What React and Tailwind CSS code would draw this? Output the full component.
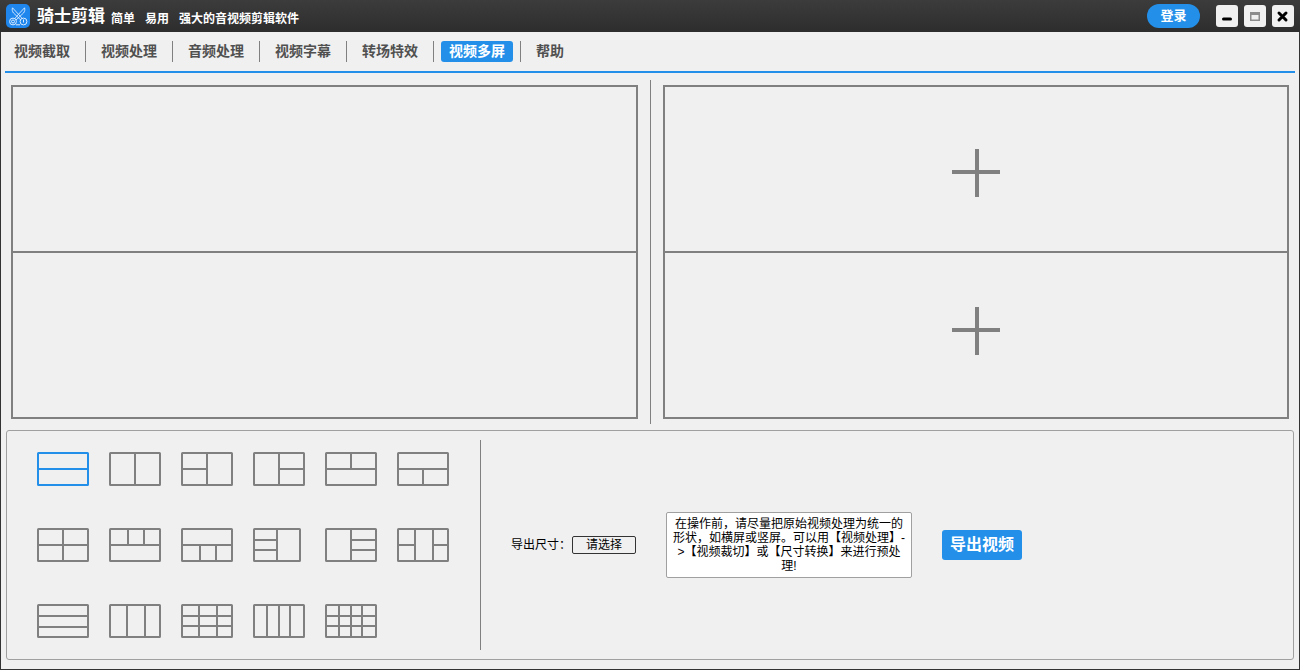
import { useState } from 'react';
import clsx from 'clsx';

const menuItems = ['视频截取', '视频处理', '音频处理', '视频字幕', '转场特效', '视频多屏', '帮助'];

// Divider lines of every split layout, drawn inside a 52x34 frame.
const layouts = [
	{ name: '上下两屏', lines: 'M1 17H51' },
	{ name: '左右两屏', lines: 'M26 1V33' },
	{ name: '左二右一', lines: 'M26 1V33M1 17H26' },
	{ name: '左一右二', lines: 'M26 1V33M26 17H51' },
	{ name: '上二下一', lines: 'M1 17H51M26 1V17' },
	{ name: '上一下二', lines: 'M1 17H51M26 17V33' },
	{ name: '四屏', lines: 'M1 17H51M26 1V33' },
	{ name: '上三下一', lines: 'M1 17H51M19 1V17M35 1V17' },
	{ name: '上一下三', lines: 'M1 17H51M19 17V33M35 17V33' },
	{ name: '左三右一', lines: 'M24 1V33M1 12H24M1 22H24', frameWidth: 46 },
	{ name: '左一右三', lines: 'M26 1V33M26 12H51M26 22H51' },
	{ name: '左二中一右二', lines: 'M18 1V33M36 1V33M1 17H18M36 17H51' },
	{ name: '上中下三屏', lines: 'M1 12H51M1 23H51' },
	{ name: '左中右三屏', lines: 'M18 1V33M36 1V33' },
	{ name: '九屏', lines: 'M18 1V33M36 1V33M1 12H51M1 22H51' },
	{ name: '四列', lines: 'M14 1V33M26 1V33M37 1V33' },
	{ name: '十二屏', lines: 'M14 1V33M26 1V33M37 1V33M1 12H51M1 22H51' },
];

const Logo = () => (
	<svg width="24" height="24" viewBox="0 0 24 24" fill="none" stroke="#dcecff" aria-hidden="true">
		<rect width="24" height="24" rx="5" fill="#1f86ee" stroke="none" />
		<path d="M6.5 3.8C5.8 5.5 6.3 7.5 7.5 9L14.8 16M6.5 3.8L14.5 12.5L16 14.5" strokeWidth="0.9" />
		<path d="M18.5 3.8C19.2 5.5 18.7 7.5 17.5 9L10 16M18.5 3.8L10.5 12.5L9 14.5" strokeWidth="0.9" />
		<circle cx="7" cy="17.5" r="3.4" strokeWidth="1" />
		<circle cx="7" cy="17.5" r="1.5" strokeWidth="1" />
		<circle cx="17.5" cy="17.5" r="3.4" strokeWidth="1" />
		<path d="M17.5 15.5V18.5M10 20.8H14" strokeWidth="1" />
	</svg>
);

const WindowButton = ({ label, children }) => (
	<button
		type="button"
		aria-label={label}
		className="flex h-[22px] w-[22px] items-center justify-center rounded-[3px] bg-[#f0f0f0]">
		<svg width="22" height="22" viewBox="0 0 22 22" fill="none">
			{children}
		</svg>
	</button>
);

const TitleBar = () => (
	<header className="flex h-8 items-center bg-linear-to-b from-[#3c3c3c] to-[#2d2d2d] px-1.5 text-white">
		<Logo />
		<h1 className="ml-[7px] pt-0.5 text-[17px] leading-6 font-bold">骑士剪辑</h1>
		<p className="ml-1.5 flex gap-2.5 pt-1.5 text-[12px] leading-5 font-bold">
			<span>简单</span>
			<span>易用</span>
			<span>强大的音视频剪辑软件</span>
		</p>
		<button
			type="button"
			className="ml-auto h-6 w-[53px] rounded-full bg-[#238fe9] text-[13px] leading-6 font-bold">
			登录
		</button>
		<div className="ml-4 flex gap-1.5">
			<WindowButton label="最小化">
				<path d="M7.5 14H14.5" stroke="#000" strokeWidth="3" strokeLinecap="round" />
			</WindowButton>
			<WindowButton label="最大化">
				<path d="M6.75 7.75H15.25V15.25H6.75Z" stroke="#8c8c8c" strokeWidth="1.5" />
				<path d="M6 8.5H16" stroke="#8c8c8c" strokeWidth="3" />
			</WindowButton>
			<WindowButton label="关闭">
				<path d="M7 8L14 15M14 8L7 15" stroke="#000" strokeWidth="3" strokeLinecap="round" />
			</WindowButton>
		</div>
	</header>
);

const MainMenu = ({ active, onSelect }) => (
	<nav className="mx-1 flex border-b-2 border-[#238fe9] py-[9px] pl-px">
		{menuItems.map((item, index) => (
			<div key={item} className="flex">
				{index > 0 && <span className="mx-[7px] w-px bg-[#808080]" />}
				<button
					type="button"
					onClick={() => onSelect(item)}
					className={clsx(
						'h-[21px] rounded-[3px] px-2 text-[14px] leading-[21px] font-bold',
						item === active ? 'bg-[#238fe9] text-white' : 'text-[#505050]',
					)}>
					{item}
				</button>
			</div>
		))}
	</nav>
);

const AddVideoButton = ({ className }) => (
	<button
		type="button"
		aria-label="添加视频"
		className={clsx('flex flex-1 items-center justify-center', className)}>
		<svg width="48" height="48" viewBox="0 0 48 48" stroke="#808080" strokeWidth="4">
			<path d="M0 23H48M25 0V48" />
		</svg>
	</button>
);

const LayoutButton = ({ layout, selected, onClick }) => (
	<button
		type="button"
		aria-label={layout.name}
		aria-pressed={selected}
		onClick={onClick}
		className={selected ? 'text-[#238fe9]' : 'text-[#808080]'}>
		<svg width="52" height="34" viewBox="0 0 52 34" fill="none" stroke="currentColor" strokeWidth="2">
			<rect x="1" y="1" width={layout.frameWidth ?? 50} height="32" rx="0.5" />
			<path d={layout.lines} />
		</svg>
	</button>
);

const App = () => {
	const [activeMenu, setActiveMenu] = useState('视频多屏');
	const [activeLayout, setActiveLayout] = useState('上下两屏');

	return (
		<div className="flex min-h-screen flex-col bg-[#f0f0f0] font-['Liberation_Sans','Noto_Sans_CJK_SC',sans-serif] text-black">
			<TitleBar />
			<div className="flex flex-1 flex-col border-x border-b border-[#333333]">
				<MainMenu active={activeMenu} onSelect={setActiveMenu} />

				{/* Preview on the left, video slots on the right */}
				<main className="flex flex-1 px-2.5 pt-[7px]">
					<section aria-label="预览" className="my-[5px] flex flex-1 flex-col border-2 border-[#808080]">
						<div className="flex-1 border-b-2 border-[#808080]" />
						<div className="flex-1" />
					</section>
					<div className="mx-3 w-px bg-[#808080]" />
					<section aria-label="视频" className="my-[5px] flex flex-1 flex-col border-2 border-[#808080]">
						<AddVideoButton className="border-b-2 border-[#808080] pt-2" />
						<AddVideoButton className="pb-2" />
					</section>
				</main>

				{/* Layout picker and export options */}
				<footer className="mx-[5px] mt-1.5 mb-[9px] flex items-center rounded-[3px] border border-[#a0a0a0] pl-[30px]">
					<div className="grid grid-cols-6 gap-x-5 gap-y-[42px] py-[21px]">
						{layouts.map((layout) => (
							<LayoutButton
								key={layout.name}
								layout={layout}
								selected={layout.name === activeLayout}
								onClick={() => setActiveLayout(layout.name)}
							/>
						))}
					</div>
					<div className="my-[9px] ml-[31px] w-px self-stretch bg-[#808080]" />
					<div className="ml-[30px] flex items-center gap-[30px]">
						<div className="flex items-center gap-px">
							<span id="export-size" className="text-[12px] leading-[18px]">导出尺寸：</span>
							<button
								type="button"
								aria-describedby="export-size"
								className="h-[18px] w-16 rounded-[2px] border border-[#333333] text-[12px] leading-4">
								请选择
							</button>
						</div>
						<p className="w-[246px] rounded-[2px] border border-[#a0a0a0] bg-white p-1 text-center text-[12px] leading-[14px]">
							在操作前，请尽量把原始视频处理为统一的形状，如横屏或竖屏。可以用【视频处理】-&gt;【视频裁切】或【尺寸转换】来进行预处理!
						</p>
						<button
							type="button"
							className="h-[30px] w-20 rounded-[3px] bg-[#238fe9] text-[16px] leading-[30px] font-bold text-white">
							导出视频
						</button>
					</div>
				</footer>
			</div>
		</div>
	);
};

export default App;
